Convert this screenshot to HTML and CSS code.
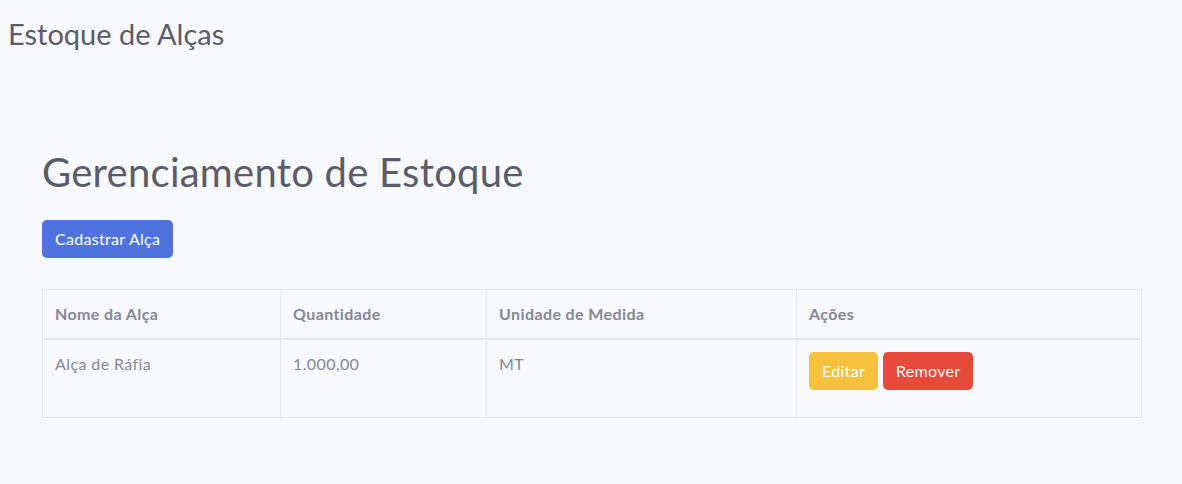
FILE: index.html
```html
<!DOCTYPE html>
<html lang="pt-BR">
<head>
<meta charset="utf-8">
<title>Estoque de Alças</title>
<link rel="stylesheet" href="styles.css">
</head>
<body>
<nav class="navbar"><span class="brand">Estoque de Alças</span></nav>
<main class="container">
  <h1 class="title">Gerenciamento de Estoque</h1>
  <button class="btn btn-primary">Cadastrar Alça</button>
  <table class="table">
    <thead>
      <tr>
        <th class="c1">Nome da Alça</th>
        <th class="c2">Quantidade</th>
        <th class="c3">Unidade de Medida</th>
        <th class="c4">Ações</th>
      </tr>
    </thead>
    <tbody>
      <tr>
        <td>Alça de Ráfia</td>
        <td>1.000,00</td>
        <td>MT</td>
        <td><div class="actions"><button class="btn btn-warning">Editar</button><button class="btn btn-danger">Remover</button></div></td>
      </tr>
    </tbody>
  </table>
</main>
</body>
</html>
```
FILE: styles.css
```css
* { box-sizing: border-box; }
html, body { margin: 0; padding: 0; }
body {
  background: #f8f9fc;
  font-family: "Lato", "Noto Sans", sans-serif;
  color: #858796;
  font-size: 16px;
  line-height: 1.5;
  letter-spacing: 0.4px;
}
.navbar {
  height: 72px;
  padding: 0 8px 6px;
  display: flex;
  align-items: center;
}
.brand {
  font-size: 29px;
  color: #5a5c69;
  line-height: 1;
  letter-spacing: 0;
}
.container {
  width: 1100px;
  margin: 0 0 0 42px;
  padding-top: 76px;
}
.title {
  margin: 0 0 24px;
  font-size: 40px;
  font-weight: 400;
  line-height: 1.2;
  color: #5a5c69;
  letter-spacing: 0.25px;
}
.btn {
  font-family: inherit;
  font-size: 16px;
  letter-spacing: 0.3px;
  line-height: 24px;
  padding: 6px 12px;
  border: 1px solid transparent;
  border-radius: 5px;
  color: #fff;
  cursor: pointer;
}
.btn-primary { background: #4e73df; }
.btn-warning { background: #f6c23e; }
.btn-danger { background: #e74a3b; }
.table {
  margin-top: 31px;
  width: 100%;
  border-collapse: collapse;
  color: #858796;
}
.table th, .table td {
  border: 1px solid #e3e6f0;
  padding: 12px;
  text-align: left;
  vertical-align: top;
}
.table th {
  font-weight: 700;
  border-bottom: 2px solid #e3e6f0;
}
.table td { height: 78px; }
.c1 { width: 238px; }
.c2 { width: 206px; }
.c3 { width: 310px; }
.actions { display: flex; gap: 5px; }
```
